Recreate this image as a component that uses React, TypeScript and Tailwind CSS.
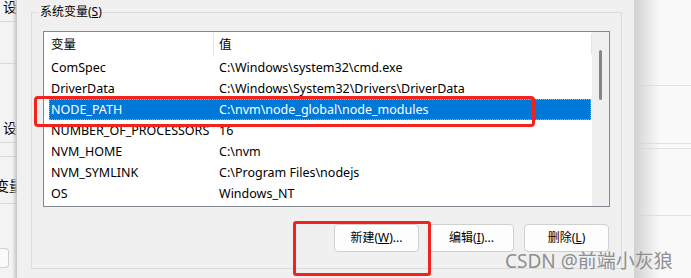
import React from "react";

const font = { fontFamily: '"Noto Sans", "Noto Sans CJK SC", sans-serif' };

const rows: [string, string][] = [
  ["ComSpec", "C:\\Windows\\system32\\cmd.exe"],
  ["DriverData", "C:\\Windows\\System32\\Drivers\\DriverData"],
  ["NODE_PATH", "C:\\nvm\\node_global\\node_modules"],
  ["NUMBER_OF_PROCESSORS", "16"],
  ["NVM_HOME", "C:\\nvm"],
  ["NVM_SYMLINK", "C:\\Program Files\\nodejs"],
  ["OS", "Windows_NT"],
];

function LeftStrip() {
  return (
    <div className="relative w-[17px] shrink-0 overflow-hidden bg-[#f3f3f3] text-[14px] text-black">
      <div className="flex flex-col">
        <div className="h-[22px] border-b border-[#d9d9d9] pl-[3px] leading-[14px] whitespace-nowrap">设置</div>
        <div className="h-[42px] border-b border-[#d9d9d9]" />
        <div className="h-[79px] border-b border-[#d9d9d9] pl-[3px] pt-[57px] leading-[14px] whitespace-nowrap">设置</div>
        <div className="h-[14px] border-b border-[#d9d9d9]" />
        <div className="h-[47px] border-b border-[#d9d9d9] pt-[22px] leading-[14px] whitespace-nowrap -ml-[5px]">变量</div>
        <div className="mt-[44px] h-[20px] w-[9px] rounded-r-[4px] border border-l-0 border-[#d0d0d0] bg-[#fbfbfb]" />
      </div>
      <div className="absolute inset-y-0 right-0 w-[5px] bg-gradient-to-r from-transparent to-[#c4c4c4]" />
    </div>
  );
}

function Btn({ children }: { children: React.ReactNode }) {
  return (
    <div className="flex h-[28px] w-[85px] items-center justify-center rounded-[4px] border border-[#d0d0d0] bg-[#fdfdfd] text-[12px] text-black">
      {children}
    </div>
  );
}

export default function App() {
  return (
    <div className="relative flex h-[278px] w-[691px] overflow-hidden bg-white" style={font}>
      <LeftStrip />
      <div className="w-[617px] shrink-0 bg-[#f0f0f0] pt-[12px] pl-[14px]">
        <div className="relative h-[257px] w-[591px] border border-[#dcdcdc] pl-[11px] pt-[18px]">
          <div className="absolute -top-[8px] left-[7px] bg-[#f0f0f0] px-[1px] text-[12px] leading-[14px] text-black">
            系统变量(<span className="underline">S</span>)
          </div>
          <div className="flex h-[176px] w-[567px] border border-[#828790] bg-white">
            <div className="flex flex-1 flex-col text-[12.5px] text-black">
              <div className="flex h-[25px] items-center">
                <div className="ml-[5px] flex h-[24px] w-[164px] items-center self-end pl-[2px] pt-[1px]">变量</div>
                <div className="h-[24px] w-px self-end bg-[#e5e5e5]" />
                <div className="flex flex-1 items-center pl-[5px] pt-[1px]">值</div>
                <div className="h-[22px] w-px self-end bg-[#e5e5e5] mb-[2px]" />
              </div>
              {rows.map(([k, v]) => {
                const sel = k === "NODE_PATH";
                return (
                  <div
                    key={k}
                    className={
                      "ml-[5px] flex h-[21px] w-[542px] items-center whitespace-nowrap pt-[1px] " +
                      (sel ? "bg-[#0078d7] text-white outline-1 -outline-offset-1 outline-dotted outline-[#e8a040]" : "")
                    }
                  >
                    <div className="w-[165px] pl-[2px]">{k}</div>
                    <div className="pl-[5px]">{v}</div>
                  </div>
                );
              })}
            </div>
            <div className="relative w-[17px] shrink-0 bg-[#efefef]">
              <div className="absolute left-[7px] top-[18px] h-[50px] w-[3px] rounded-full bg-[#858585]" />
            </div>
          </div>
          <div className="mt-[17px] flex w-[566px] justify-end gap-[10px]">
            <Btn>
              新建(<span className="underline">W</span>)...
            </Btn>
            <Btn>
              编辑(<span className="underline">I</span>)...
            </Btn>
            <Btn>
              删除(<span className="underline">L</span>)
            </Btn>
          </div>
        </div>
      </div>
      <div className="relative flex-1 bg-[#f9f9f9]">
        <div className="absolute inset-y-0 left-0 w-[26px] bg-gradient-to-r from-[#d2d2d2] to-transparent" />
        <div className="flex flex-col">
          <div className="h-[86px] border-b border-[#e2e2e2]" />
          <div className="h-[58px] border-b border-[#e2e2e2]" />
          <div className="h-[5px] border-b border-[#e2e2e2]" />
          <div className="h-[67px] border-b border-[#e2e2e2]" />
        </div>
      </div>
      <div className="pointer-events-none absolute left-[34px] top-[96px] h-[31px] w-[501px] rounded-[4px] border-[3px] border-[#f2231d]" />
      <div className="pointer-events-none absolute left-[293px] top-[221px] h-[55px] w-[138px] rounded-[3px] border-[3px] border-[#f2231d]" />
      <div className="pointer-events-none absolute left-[505px] top-[249px] text-[19px] leading-[24px] text-[#8f8f8f] whitespace-nowrap">
        CSDN @前端小灰狼
      </div>
    </div>
  );
}
